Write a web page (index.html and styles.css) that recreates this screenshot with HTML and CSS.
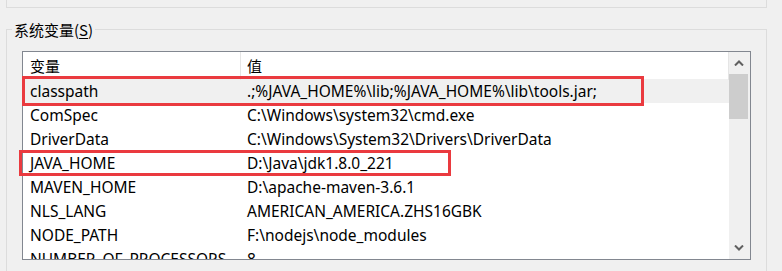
FILE: index.html
```html
<!DOCTYPE html>
<html lang="zh-CN">
<head>
    <meta charset="UTF-8">
    <title>环境变量</title>
    <link rel="stylesheet" href="styles.css">
</head>
<body>
    <div class="prev-group"></div>

    <div class="group">
        <div class="group-title">系统变量(<u>S</u>)</div>

        <div class="list-wrap">
            <div class="list">
                <div class="table">
                    <div class="row head">
                        <div class="cell">变量</div>
                        <div class="cell">值</div>
                    </div>
                    <div class="row hot">
                        <div class="cell">classpath</div>
                        <div class="cell">.;%JAVA_HOME%\lib;%JAVA_HOME%\lib\tools.jar;</div>
                    </div>
                    <div class="row">
                        <div class="cell">ComSpec</div>
                        <div class="cell">C:\Windows\system32\cmd.exe</div>
                    </div>
                    <div class="row">
                        <div class="cell">DriverData</div>
                        <div class="cell">C:\Windows\System32\Drivers\DriverData</div>
                    </div>
                    <div class="row">
                        <div class="cell">JAVA_HOME</div>
                        <div class="cell">D:\Java\jdk1.8.0_221</div>
                    </div>
                    <div class="row">
                        <div class="cell">MAVEN_HOME</div>
                        <div class="cell">D:\apache-maven-3.6.1</div>
                    </div>
                    <div class="row">
                        <div class="cell">NLS_LANG</div>
                        <div class="cell">AMERICAN_AMERICA.ZHS16GBK</div>
                    </div>
                    <div class="row">
                        <div class="cell">NODE_PATH</div>
                        <div class="cell">F:\nodejs\node_modules</div>
                    </div>
                    <div class="row">
                        <div class="cell">NUMBER_OF_PROCESSORS</div>
                        <div class="cell">8</div>
                    </div>
                </div>

                <div class="scrollbar">
                    <div class="arrow">
                        <svg width="10" height="6" viewBox="0 0 10 6"><path d="M1 5.5 L5 1.5 L9 5.5" fill="none" stroke="#606060" stroke-width="2"/></svg>
                    </div>
                    <div class="thumb"></div>
                    <div class="track"></div>
                    <div class="arrow">
                        <svg width="10" height="6" viewBox="0 0 10 6"><path d="M1 0.5 L5 4.5 L9 0.5" fill="none" stroke="#606060" stroke-width="2"/></svg>
                    </div>
                </div>
            </div>

            <!-- red marks drawn over the list -->
            <div class="mark mark-classpath"></div>
            <div class="mark mark-java"></div>
        </div>
    </div>
</body>
</html>
```

FILE: styles.css
```css
body {
    margin: 0;
    background: #f0f0f0;
    color: #000;
    font-family: "Noto Sans", "Noto Sans CJK SC", sans-serif;
    font-size: 15.5px;
    overflow: hidden;
}

.prev-group {
    box-sizing: border-box;
    width: 761px;
    height: 8px;
    margin-left: 6px;
    border: 1px solid #dcdcdc;
    border-top: none;
}

.group {
    box-sizing: border-box;
    width: 761px;
    height: 250px;
    margin: 21px 0 0 6px;
    padding-left: 15px;
    border: 1px solid #dcdcdc;
    border-bottom: none;
}

.group-title {
    width: fit-content;
    margin: -10px 0 0 -10px;
    padding: 0 2px;
    font-size: 15px;
    line-height: 20px;
    background: #f0f0f0;
    font-family: "Noto Sans CJK SC", sans-serif;
}

.group-title u {
    text-underline-offset: 2px;
}

.list-wrap {
    position: relative;
    width: 729px;
    margin-top: 11px;
}

.list {
    display: flex;
    height: 207px;
    border: 1px solid #828790;
    background: #fff;
}

.table {
    flex: 1;
    overflow: hidden;
}

.row {
    display: grid;
    grid-template-columns: 218px 1fr;
    height: 24px;
    line-height: 24px;
    white-space: nowrap;
}

.row .cell {
    padding-left: 7px;
}

.row .cell + .cell {
    padding-left: 6px;
}

.head {
    height: 27px;
    font-size: 15px;
    font-family: "Noto Sans CJK SC", sans-serif;
}

.head .cell {
    border-right: 1px solid #e5e5e5;
    line-height: 28px;
}

.hot {
    background: #f0f0f0;
}

.scrollbar {
    display: flex;
    flex-direction: column;
    width: 21px;
    background: #f0f0f0;
}

.arrow {
    display: flex;
    align-items: center;
    justify-content: center;
    height: 22px;
    padding-right: 1px;
}

.thumb {
    width: 19px;
    height: 45px;
    background: #cdcdcd;
}

.track {
    flex: 1;
}

.mark {
    position: absolute;
    box-sizing: border-box;
    border: 3px solid #ea3a3f;
}

.mark-classpath {
    left: 0;
    top: 25px;
    width: 622px;
    height: 30px;
}

.mark-java {
    left: -3px;
    top: 99px;
    width: 432px;
    height: 26px;
}
```
